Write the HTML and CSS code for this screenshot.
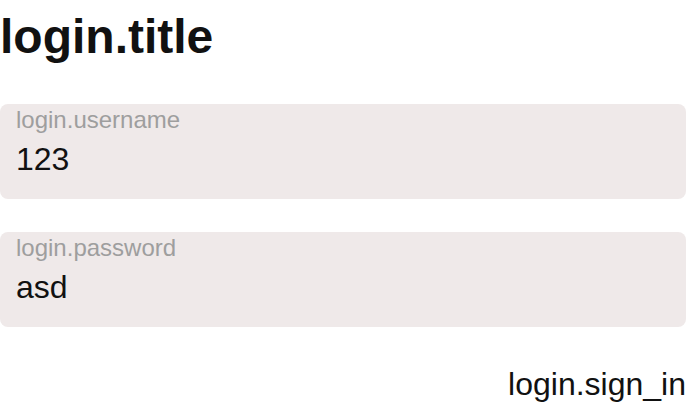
FILE: index.html
```html
<!DOCTYPE html>
<html>
<head>
<meta charset="utf-8">
<link rel="stylesheet" href="styles.css">
</head>
<body>
<main class="login">
  <h1 class="title">login.title</h1>
  <form class="form">
    <label class="field">
      <span class="field-label">login.username</span>
      <span class="field-value">123</span>
    </label>
    <label class="field">
      <span class="field-label">login.password</span>
      <span class="field-value">asd</span>
    </label>
    <div class="actions">
      <button type="button" class="sign-in">login.sign_in</button>
    </div>
  </form>
</main>
</body>
</html>
```
FILE: styles.css
```css
html, body {
  margin: 0;
  padding: 0;
  background: #ffffff;
}
body {
  font-family: "Liberation Sans", Arial, sans-serif;
  color: #111111;
}
.login {
  display: flex;
  flex-direction: column;
}
.title {
  margin: 9px 0 0 0;
  font-size: 48px;
  font-weight: 700;
  line-height: 55px;
  color: #111111;
}
.form {
  display: flex;
  flex-direction: column;
  gap: 33px;
  margin-top: 40px;
}
.field {
  display: flex;
  flex-direction: column;
  box-sizing: border-box;
  height: 95px;
  padding: 3px 16px 0 16px;
  background: #efe9e9;
  border-radius: 8px;
}
.field-label {
  font-size: 24px;
  line-height: 26px;
  color: #9e9e9e;
}
.field-value {
  margin-top: 9px;
  font-size: 32px;
  line-height: 35px;
  color: #111111;
}
.actions {
  display: flex;
  justify-content: flex-end;
  margin-top: 6px;
}
.sign-in {
  border: 0;
  background: transparent;
  padding: 0;
  font-family: "Liberation Sans", Arial, sans-serif;
  font-size: 32px;
  line-height: 36px;
  color: #111111;
}
```
